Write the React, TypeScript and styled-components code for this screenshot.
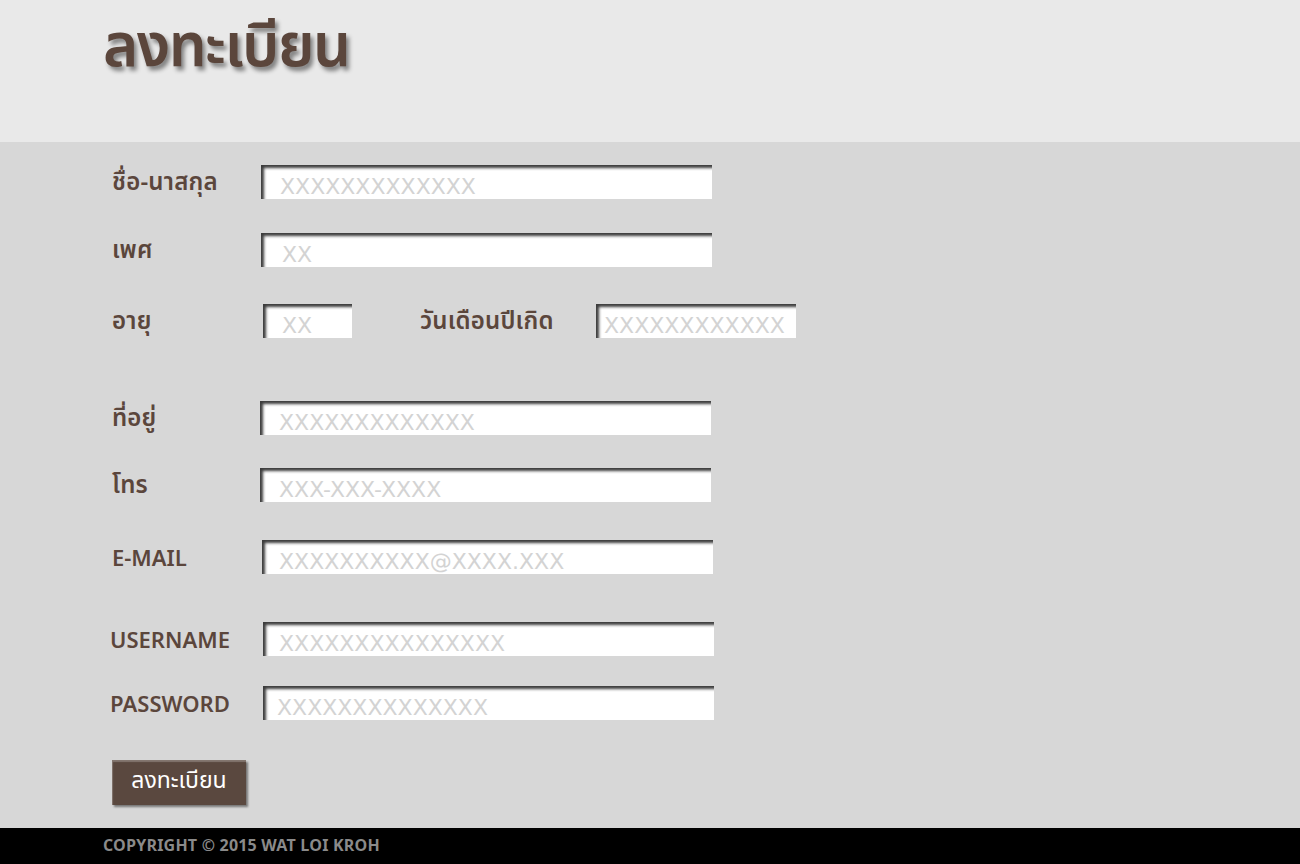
import styled, { createGlobalStyle } from 'styled-components';

const GlobalStyle = createGlobalStyle`
  html, body {
    margin: 0;
    padding: 0;
    background: #d7d7d7;
  }

  body {
    font-family: 'Noto Sans Thai', 'Noto Sans', 'DejaVu Sans', sans-serif;
  }
`;

const Page = styled.div`
  width: 1300px;
  min-height: 864px;
  display: flex;
  flex-direction: column;
`;

const Header = styled.header`
  height: 142px;
  background: #e9e9e9;
  padding-left: 103px;
  box-sizing: border-box;

  > h1 {
    margin: 0;
    padding-top: 7px;
    font-size: 60px;
    line-height: 82px;
    font-weight: 600;
    color: #5b463c;
    text-shadow: 3px 4px 4px rgba(0, 0, 0, 0.45);
    letter-spacing: -1.5px;
  }
`;

const Form = styled.form`
  flex: 1;
  display: flex;
  flex-direction: column;
  padding: 23px 0 0 112px;
`;

const Row = styled.div<{ $top?: number; $shift?: number }>`
  display: flex;
  align-items: center;
  height: 34px;
  margin-top: ${(p) => p.$top ?? 0}px;
  margin-left: ${(p) => p.$shift ?? 0}px;
`;

const Label = styled.label<{ $width?: number; $latin?: boolean }>`
  width: ${(p) => p.$width ?? 149}px;
  flex-shrink: 0;
  height: 34px;
  line-height: ${(p) => (p.$latin ? 40 : 36)}px;
  font-size: ${(p) => (p.$latin ? 22 : 24)}px;
  font-weight: 600;
  color: #5b463c;
  letter-spacing: ${(p) => (p.$latin ? 0 : 0.2)}px;
  white-space: nowrap;
`;

const Field = styled.input<{ $width?: number; $indent?: number }>`
  width: ${(p) => p.$width ?? 451}px;
  height: 34px;
  box-sizing: border-box;
  border: none;
  outline: none;
  background: #fff;
  padding: 8px 0 0 ${(p) => p.$indent ?? 19}px;
  font-family: 'DejaVu Sans', sans-serif;
  font-size: 22px;
  line-height: 24px;
  color: #5b463c;
  box-shadow: inset 3px 3px 3px #3c3c3c;

  &::placeholder {
    color: #d3d3d3;
  }
`;

const Button = styled.button`
  margin-top: 40px;
  width: 134px;
  height: 45px;
  border: none;
  background: #5a483f;
  color: #fff;
  font-family: inherit;
  font-size: 23px;
  padding: 0 0 4px;
  box-shadow: inset 1px 2px 1px rgba(255, 255, 255, 0.25), 2px 2px 2px rgba(0, 0, 0, 0.45);
  cursor: pointer;
`;

const Footer = styled.footer`
  height: 36px;
  background: #000;
  padding-left: 103px;
  display: flex;
  align-items: center;
  font-size: 16px;
  font-weight: 700;
  letter-spacing: 0.2px;
  color: #8a8a8a;
`;

export default function App() {
  return (
    <Page>
      <GlobalStyle />
      <Header>
        <h1>ลงทะเบียน</h1>
      </Header>
      <Form onSubmit={(e) => e.preventDefault()}>
        <Row>
          <Label>ชื่อ-นาสกุล</Label>
          <Field placeholder="XXXXXXXXXXXXX" />
        </Row>
        <Row $top={34}>
          <Label>เพศ</Label>
          <Field placeholder="XX" $indent={21} />
        </Row>
        <Row $top={37}>
          <Label $width={151}>อายุ</Label>
          <Field $width={89} placeholder="XX" />
          <Label $width={176} style={{ marginLeft: 68 }}>
            วันเดือนปีเกิด
          </Label>
          <Field $width={200} placeholder="XXXXXXXXXXXX" $indent={8} />
        </Row>
        <Row $top={63}>
          <Label $width={148}>ที่อยู่</Label>
          <Field placeholder="XXXXXXXXXXXXX" />
        </Row>
        <Row $top={33}>
          <Label $width={148}>โทร</Label>
          <Field placeholder="XXX-XXX-XXXX" />
        </Row>
        <Row $top={38}>
          <Label $width={150} $latin>
            E-MAIL
          </Label>
          <Field placeholder="XXXXXXXXXX@XXXX.XXX" $indent={17} />
        </Row>
        <Row $top={48} $shift={-2}>
          <Label $width={153} $latin>
            USERNAME
          </Label>
          <Field placeholder="XXXXXXXXXXXXXXX" $indent={16} />
        </Row>
        <Row $top={30} $shift={-2}>
          <Label $width={153} $latin>
            PASSWORD
          </Label>
          <Field type="password" placeholder="XXXXXXXXXXXXXX" $indent={14} />
        </Row>
        <Button type="submit">ลงทะเบียน</Button>
      </Form>
      <Footer>COPYRIGHT © 2015 WAT LOI KROH</Footer>
    </Page>
  );
}
